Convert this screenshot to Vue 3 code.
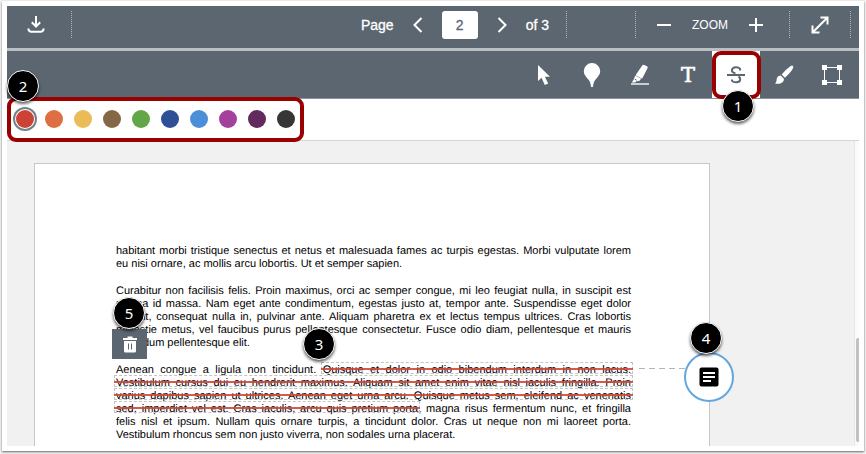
<script setup>
import { ref } from 'vue'

const colors = [
  { name: 'Red', value: '#cb4335' },
  { name: 'Orange', value: '#dd6f42' },
  { name: 'Yellow', value: '#ebbb57' },
  { name: 'Brown', value: '#856745' },
  { name: 'Green', value: '#63a647' },
  { name: 'Dark blue', value: '#2f4f97' },
  { name: 'Blue', value: '#4b8fd9' },
  { name: 'Pink', value: '#a4419c' },
  { name: 'Purple', value: '#622a5d' },
  { name: 'Black', value: '#363636' },
]
const active = ref('Red')
const page = ref('2')

// Each line holds plain text followed by struck text and a plain tail.
const paragraphs = [
  [
    { text: 'habitant morbi tristique senectus et netus et malesuada fames ac turpis egestas. Morbi vulputate lorem' },
    { text: 'eu nisi ornare, ac mollis arcu lobortis. Ut et semper sapien.', last: true },
  ],
  [
    { text: 'Curabitur non facilisis felis. Proin maximus, orci ac semper congue, mi leo feugiat nulla, in suscipit est' },
    { text: 'massa id massa. Nam eget ante condimentum, egestas justo at, tempor ante. Suspendisse eget dolor' },
    { text: 'blandit, consequat nulla in, pulvinar ante. Aliquam pharetra ex et lectus tempus ultrices. Cras lobortis' },
    { text: 'molestie metus, vel faucibus purus pellentesque consectetur. Fusce odio diam, pellentesque et mauris' },
    { text: 'bibendum pellentesque elit.', last: true },
  ],
  [
    { text: 'Aenean congue a ligula non tincidunt. ', struck: 'Quisque et dolor in odio bibendum interdum in non lacus.' },
    { struck: 'Vestibulum cursus dui eu hendrerit maximus. Aliquam sit amet enim vitae nisl iaculis fringilla. Proin' },
    { struck: 'varius dapibus sapien ut ultrices. Aenean eget urna arcu. Quisque metus sem, eleifend ac venenatis' },
    { struck: 'sed, imperdiet vel est. Cras iaculis, arcu quis pretium porta', tail: ', magna risus fermentum nunc, et fringilla' },
    { text: 'felis nisl et ipsum. Nullam quis ornare turpis, a tincidunt dolor. Cras ut neque non mi laoreet porta.' },
    { text: 'Vestibulum rhoncus sem non justo viverra, non sodales urna placerat.', last: true },
  ],
]
</script>

<template>
  <main class="window">
    <header class="topbar">
      <button class="icon-btn download" aria-label="Download">
        <svg width="18" height="20" viewBox="0 0 18 20" fill="none" stroke="#fff" stroke-width="2">
          <path d="M9 1v10M4.8 7.3 9 11.5l4.200-4.200" />
          <path d="M1.200 13.500c.6 2.900 1.500 3.300 3 3.300h9.600c1.500 0 2.400-.4 3-3.300" />
        </svg>
      </button>
      <i class="divider"></i>
      <div class="pager">
        <label for="page">Page</label>
        <button class="icon-btn" aria-label="Previous page">
          <svg width="10" height="16" viewBox="0 0 10 16" fill="none" stroke="#fff" stroke-width="2"><path d="M8.500 1 1.500 8l7 7" /></svg>
        </button>
        <input id="page" v-model="page" type="text" />
        <button class="icon-btn" aria-label="Next page">
          <svg width="10" height="16" viewBox="0 0 10 16" fill="none" stroke="#fff" stroke-width="2"><path d="m1.500 1 7 7-7 7" /></svg>
        </button>
        <span>of 3</span>
      </div>
      <i class="divider"></i>
      <div class="zoom">
        <i class="divider"></i>
        <button class="icon-btn" aria-label="Zoom out">
          <svg width="14" height="14" viewBox="0 0 14 14" stroke="#fff" stroke-width="2"><path d="M0 7h14" /></svg>
        </button>
        <span class="zoom-label">ZOOM</span>
        <button class="icon-btn zoom-in" aria-label="Zoom in">
          <svg width="14" height="14" viewBox="0 0 14 14" stroke="#fff" stroke-width="2"><path d="M0 7h14M7 0v14" /></svg>
        </button>
        <i class="divider"></i>
        <button class="icon-btn" aria-label="Full screen">
          <svg width="18" height="18" viewBox="0 0 18 18" fill="none" stroke="#fff" stroke-width="2"><path d="M2 16 16 2M9.500 1.500h7v7M1.500 9.500v7h7" /></svg>
        </button>
        <i class="divider"></i>
      </div>
    </header>

    <nav class="toolbar">
      <button class="tool" aria-label="Select">
        <svg width="24" height="26" viewBox="0 0 24 26" fill="#fff"><path d="M6 3v16l3.500-3.200 3.300 7.200 3.400-1.500-3.300-6.800H18z" /></svg>
      </button>
      <button class="tool" aria-label="Point annotation">
        <svg width="24" height="26" viewBox="0 0 24 26" fill="#fff"><path d="M12 1a8.200 8.200 0 0 1 8.200 8.200c0 3.600-2.700 5.800-5 8.800-1.500 2-2 4-2.200 7h-2c-.2-3-.7-5-2.200-7-2.300-3-5-5.200-5-8.800A8.200 8.200 0 0 1 12 1z" /></svg>
      </button>
      <button class="tool" aria-label="Highlight">
        <svg width="24" height="26" viewBox="0 0 24 26"><path fill="#fff" d="M14.200 3.500q.8-1.100 2-.6l2.800 1.300q1.200.6.600 1.900l-5 9.700q-.4.900-1.300.4l-4.900-2.400q-.8-.5-.3-1.300zM7.200 13.500l6 3.300-2 2.200-2.700.2-1.500 1.300H3.800l2.200-3.500z" /><path d="m6.800 17.200 1.800 1" stroke="#5b6670" /><path fill="#c9ced2" d="M3 21h18v2H3z" /></svg>
      </button>
      <button class="tool type" aria-label="Free text"><span>T</span></button>
      <button class="tool selected" aria-label="Strikethrough">
        <svg width="24" height="26" viewBox="0 0 24 26" fill="none" stroke="#5b6670" stroke-width="2"><path d="M16 8.500V6.800C14.500 4.600 8.800 4.300 8 7.700c-.4 2 .8 3 3.500 3.700M8 17.500v1.200c1.500 2.200 7.500 2.500 8.200-.9.200-1.600-.4-2.600-1.700-3.300M3 13h18" /></svg>
      </button>
      <button class="tool" aria-label="Draw">
        <svg width="24" height="26" viewBox="0 0 24 26" fill="#fff"><path d="M20.500 3.700c1.300.7.9 2-.2 3.700-2 3-4.500 5.800-7.400 8.300l-3.200-3.200c3-3.400 5.800-6.200 8.700-8.200.9-.6 1.600-.9 2.100-.6zM8.700 13.500l3.200 3.200c.3 3.500-3.200 5.700-8.900 4.800 2.100-1.800 1.200-3.400 2-5.500.6-1.500 2-2.500 3.700-2.500z" /></svg>
      </button>
      <button class="tool" aria-label="Area annotation">
        <svg width="24" height="26" viewBox="0 0 24 26" fill="#fff"><path d="M4.500 5.500h15v15h-15z" fill="none" stroke="#fff" stroke-width="1" /><path d="M2 3h5v5H2zM17 3h5v5h-5zM2 18h5v5H2zM17 18h5v5h-5z" /></svg>
      </button>
    </nav>

    <section class="palette" aria-label="Annotation colors">
      <div class="swatches">
        <button
          v-for="c in colors"
          :key="c.name"
          class="swatch"
          :class="{ on: c.name === active }"
          :style="{ backgroundColor: c.value }"
          :aria-label="c.name"
          @click="active = c.name"
        ></button>
      </div>
    </section>

    <section class="viewer">
      <article class="sheet">
        <p v-for="(lines, i) in paragraphs" :key="i">
          <span v-for="(l, j) in lines" :key="j" class="line" :class="{ last: l.last }">{{ l.text }}<s v-if="l.struck">{{ l.struck }}</s>{{ l.tail }}</span>
        </p>
      </article>
      <div class="connector"></div>
      <button class="trash" aria-label="Delete annotation">
        <svg width="16" height="18" viewBox="0 0 16 18"><path fill="#fff" d="M5.500 1.500h5v1.500H15v2H1V3h4.500zM2 6h12v10q0 1.500-1.500 1.500h-9Q2 17.500 2 16z" /><path d="M6.500 8.500v6M9.500 8.500v6" stroke="#5b6670" /></svg>
      </button>
      <button class="comment" aria-label="Add comment">
        <svg width="20" height="20" viewBox="0 0 20 20"><rect width="19" height="19" x=".5" y=".5" rx="2" fill="#000" /><path d="M4 6h12M4 10h12M4 14h8" stroke="#fff" stroke-width="2" /></svg>
      </button>
      <div class="scrollbar"><i></i></div>
    </section>

    <b class="badge n1">1</b>
    <b class="badge n2">2</b>
    <b class="badge n3">3</b>
    <b class="badge n4">4</b>
    <b class="badge n5">5</b>
  </main>
</template>

<style>
body {
  margin: 0;
  background: #f4f4f4;
}
</style>

<style scoped>
* {
  box-sizing: border-box;
}
button {
  padding: 0;
  border: 0;
  background: none;
  color: inherit;
  font: inherit;
}
svg {
  display: block;
}
.window {
  position: relative;
  margin: 1px 2px 3px;
  padding: 5px;
  background: #fff;
  box-shadow: 0 1px 2px #666;
  font-family: "Liberation Sans", Arial, sans-serif;
}
.topbar {
  display: flex;
  align-items: center;
  height: 42px;
  padding-bottom: 5px;
  background: #5b6670;
  color: #fff;
  font-size: 14px;
}
.download {
  margin: 0 26px 0 20px;
}
.divider {
  width: 1px;
  height: 27px;
  border-left: 1px dotted #aeb5ba;
}
.pager {
  display: flex;
  align-items: center;
  gap: 19px;
  margin-left: auto;
  margin-right: 17px;
  -webkit-text-stroke: 0.3px #fff;
}
.pager input {
  width: 36px;
  height: 28px;
  border: 0;
  border-radius: 3px;
  padding: 0;
  background: #fff;
  color: #5b6670;
  font: 14px "Liberation Sans", Arial, sans-serif;
  text-align: center;
  -webkit-text-stroke: 0.3px #5b6670;
}
.zoom {
  display: flex;
  align-items: center;
  gap: 21px;
  margin-left: 68px;
  margin-right: 8px;
}
.zoom-in {
  margin-right: 5px;
}
.zoom-label {
  font-size: 12px;
}
.toolbar {
  display: flex;
  justify-content: flex-end;
  height: 51px;
  padding-right: 3px;
  border-top: 3px solid #b9bfc3;
  border-bottom: 1px solid #8d959b;
  background: #5b6670;
}
.tool {
  display: flex;
  align-items: center;
  justify-content: center;
  width: 48px;
  color: #fff;
}
.type {
  font-family: "DejaVu Serif", serif;
  font-size: 21px;
  -webkit-text-stroke: 0.6px #fff;
}
.selected {
  position: relative;
  background: #fff;
}
.selected::after {
  content: "";
  position: absolute;
  inset: 0 -1px -1px 0;
  border: 4px solid #990000;
  border-radius: 9px;
}
.palette {
  display: flow-root;
  height: 42px;
  border-bottom: 1px solid #d5d5d5;
}
.swatches {
  position: relative;
  z-index: 1;
  display: flex;
  align-items: center;
  gap: 11px;
  width: 297px;
  height: 45px;
  margin-top: -2px;
  padding: 0 0 1px 5px;
  border: 4px solid #990000;
  border-radius: 9px;
  background: #fff;
}
.swatch {
  width: 18px;
  height: 18px;
  border-radius: 50%;
}
.swatch.on {
  box-shadow: 0 0 0 1px #fff, 0 0 0 3px #74808a;
}
.viewer {
  position: relative;
  height: 305px;
  padding: 22px 149px 0 27px;
  overflow: hidden;
  background: #f1f1f1;
}
.sheet {
  height: 300px;
  padding: 81px 78px 0 81px;
  border: 1px solid #c6c8ca;
  background: #fff;
  color: #000;
  font-size: 11px;
  line-height: 13px;
  text-rendering: geometricPrecision;
}
.sheet p {
  margin: 0 0 14px;
}
.line {
  display: block;
  white-space: nowrap;
  text-align-last: justify;
}
.line.last {
  text-align-last: left;
}
s {
  position: relative;
  text-decoration: none;
}
s::before {
  content: "";
  position: absolute;
  inset: -2px -2px 2px;
  border: 1px dashed #c4c4c4;
}
s::after {
  content: "";
  position: absolute;
  inset: 4px -2px auto;
  height: 2px;
  background: #cf4436e0;
}
.connector {
  position: absolute;
  top: 227px;
  left: 632px;
  width: 50px;
  height: 1px;
  background: repeating-linear-gradient(90deg, #b5b5b5 0 6px, #fff 6px 10px);
}
.trash {
  position: absolute;
  top: 188px;
  left: 105px;
  display: grid;
  place-items: center;
  width: 35px;
  height: 30px;
  background: #5b6670;
}
.comment {
  position: absolute;
  top: 211px;
  left: 677px;
  display: grid;
  place-items: center;
  width: 50px;
  height: 50px;
  border: 2px solid #65a6df;
  border-radius: 50%;
  background: #fff;
}
.scrollbar {
  position: absolute;
  inset: 0 0 0 auto;
  width: 5px;
  border-left: 1px solid #e6e6e6;
  background: #fafafa;
}
.scrollbar i {
  position: absolute;
  top: 197px;
  right: 0;
  width: 3px;
  height: 104px;
  border-radius: 2px 0 0 2px;
  background: #c1c1c1;
}
.badge {
  position: absolute;
  z-index: 2;
  display: grid;
  place-items: center;
  width: 32px;
  height: 32px;
  border: 1px solid #fff;
  border-radius: 50%;
  background: #000;
  color: #fff;
  box-shadow: 0 2px 3px #0009;
  font: 15px "Noto Sans", sans-serif;
}
.n1 { left: 720px; top: 89px; }
.n2 { left: 5px; top: 69px; }
.n3 { left: 301px; top: 327px; }
.n4 { left: 688px; top: 321px; }
.n5 { left: 111px; top: 296px; }
</style>
